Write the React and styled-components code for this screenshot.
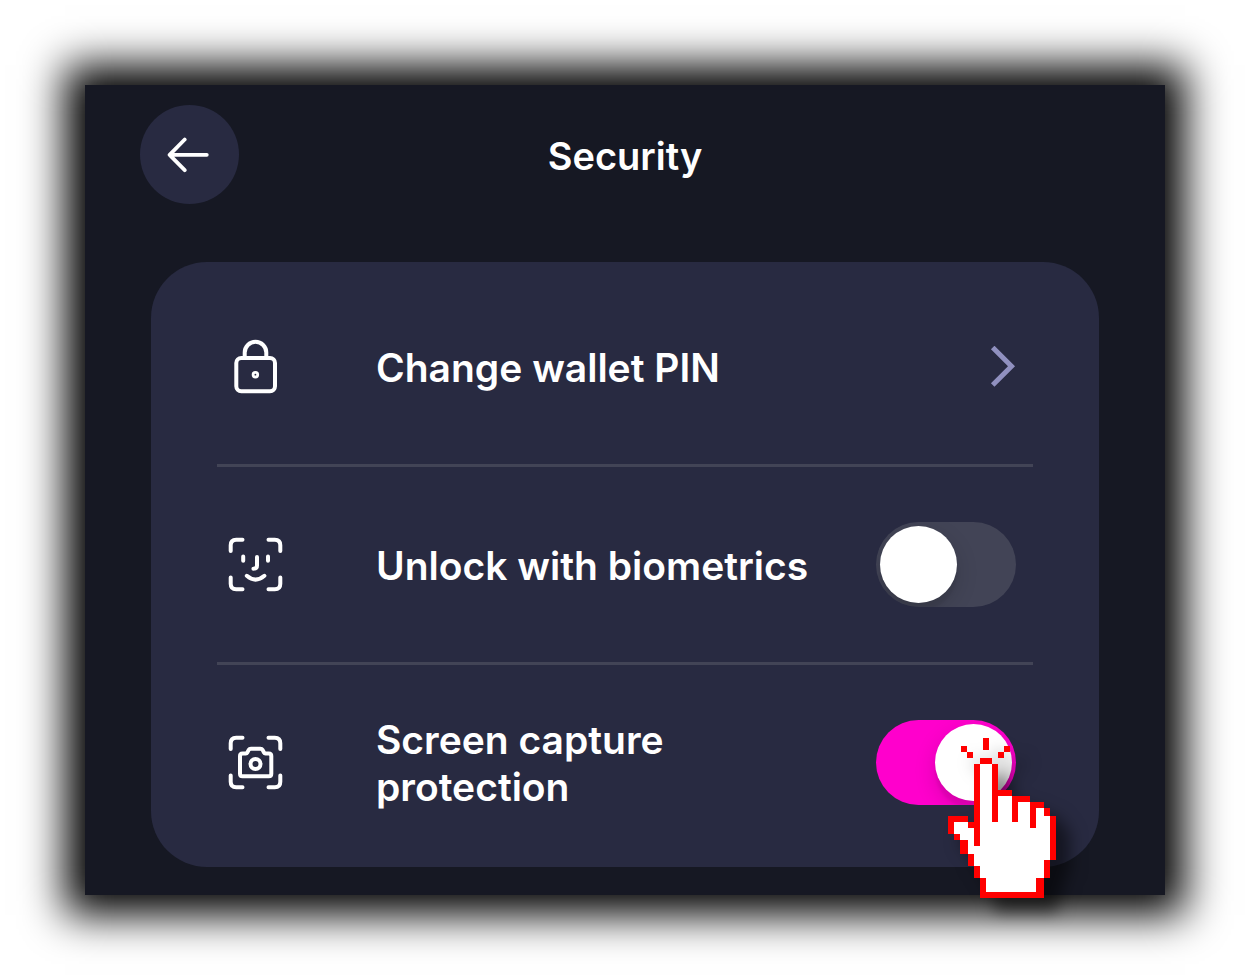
import { useState } from 'react';
import styled, { createGlobalStyle } from 'styled-components';

const GlobalStyle = createGlobalStyle`
    * {
        box-sizing: border-box;
    }

    body {
        margin: 0;
        background: #FFFFFF;
        font-family: Inter, 'Liberation Sans', sans-serif;
        overflow-x: hidden;
    }
`;

const Page = styled.main`
    padding: 85px;
`;

const Screen = styled.section`
    padding: 20px 55px 28px;
    background: #161823;
    color: #FFFFFF;
    box-shadow: 0 0 40px 20px #000000;
`;

const Header = styled.header`
    display: grid;
    grid-template-columns: 99px 1fr 99px;
    align-items: center;
    margin-bottom: 58px;
`;

const BackButton = styled.button`
    display: flex;
    align-items: center;
    justify-content: center;
    width: 99px;
    height: 99px;
    padding: 0;
    border: none;
    border-radius: 50%;
    background: #282A41;
    color: #FFFFFF;
    cursor: pointer;
`;

const Title = styled.h1`
    margin: 0;
    padding-top: 4px;
    font-size: 38px;
    font-weight: 600;
    line-height: 47px;
    text-align: center;
`;

const Card = styled.ul`
    margin: 0 11px;
    padding: 7px 66px;
    border-radius: 56px;
    background: #282A41;
    list-style: none;
`;

const Row = styled.li`
    border-top: ${(props) => (props.$first ? 'none' : '3px solid #424456')};
`;

const RowBody = styled.div`
    display: flex;
    align-items: center;
    width: 100%;
    min-height: 195px;
    padding: 0 17px 0 10px;
`;

const LinkBody = styled(RowBody).attrs({ as: 'button', type: 'button' })`
    border: none;
    background: none;
    color: inherit;
    font-family: inherit;
    text-align: left;
    cursor: pointer;
`;

const Label = styled.span`
    flex: 1;
    margin: 0 24px 0 93px;
    padding-top: 1px;
    font-size: 39px;
    font-weight: 600;
    line-height: 47px;
`;

const SwitchBox = styled.div`
    position: relative;
    height: 85px;
`;

const Switch = styled.input`
    appearance: none;
    display: block;
    width: 140px;
    height: 85px;
    margin: 0;
    padding: 4px;
    border-radius: 43px;
    background: ${(props) => (props.checked ? '#FF00CC' : '#424456')};
    overflow: hidden;
    cursor: pointer;

    &::before {
        content: '';
        display: block;
        width: 77px;
        height: 77px;
        margin-left: ${(props) => (props.checked ? 'auto' : '0')};
        border-radius: 50%;
        background: #FFFFFF;
        box-shadow: 0 8px 22px rgba(0, 0, 0, 0.15), 0 8px 3px rgba(0, 0, 0, 0.06);
    }
`;

const Pointer = styled.svg`
    position: absolute;
    top: 18px;
    left: 72px;
    filter: drop-shadow(14px 14px 8px rgba(0, 0, 0, 0.5));
    pointer-events: none;
`;

const RowIcon = styled.svg`
    flex: none;
    width: 56px;
    height: 56px;
    fill: none;
    stroke: #FFFFFF;
    stroke-width: 4;
    stroke-linecap: round;
    stroke-linejoin: round;
`;

const LockIcon = () => (
    <RowIcon viewBox="0 0 56 56" aria-hidden="true">
        <rect x="9.3" y="19" width="38.7" height="33.3" rx="5" />
        <path d="M17.7 19V13.6a10.8 10.8 0 0 1 21.6 0V19" />
        <circle cx="28.4" cy="35.7" r="2.3" strokeWidth="2.8" />
    </RowIcon>
)

const Corners = () => (
    <path d="M3.7 14V8.2q0-5.5 5.5-5.5H15.5M41.5 2.7H47.8q5.5 0 5.5 5.5V14M53.3 40.5V46.8q0 5.5-5.5 5.5H41.5M15.5 52.3H9.2q-5.5 0-5.5-5.5V40.5" />
)

const FaceIcon = () => (
    <RowIcon viewBox="0 0 56 56" aria-hidden="true">
        <Corners />
        <path d="M16.2 19.4V23.7M41 19.4V23.7M30 20v8.5q0 3.2-3.6 3.2M19.8 38.8q8.7 7.6 17.6 0" />
    </RowIcon>
)

const CameraIcon = () => (
    <RowIcon viewBox="0 0 56 56" aria-hidden="true">
        <Corners />
        <path d="M15.5 41.3H41.8q2.5 0 2.5-2.5V21q0-2.5-2.5-2.5H38.5q-1 0-1.5-1l-1.3-2.4q-.8-1.4-2.4-1.4H24q-1.6 0-2.4 1.4L20.3 17.5q-.5 1-1.5 1H15.5q-2.5 0-2.5 2.5V38.8q0 2.5 2.5 2.5z" />
        <circle cx="28.5" cy="29" r="5" />
    </RowIcon>
)

const ArrowIcon = () => (
    <svg width="45" height="37" viewBox="0 0 45 37" fill="none" stroke="currentColor" strokeWidth="3.8" strokeLinecap="round" strokeLinejoin="round" aria-hidden="true">
        <path d="M39.8 18.8H2.6M17.7 3.5L2.6 18.8L17.7 34.2" />
    </svg>
)

const ChevronIcon = () => (
    <svg width="26" height="42" viewBox="0 0 26 42" fill="none" stroke="#9090BF" strokeWidth="5" aria-hidden="true">
        <path d="M2.7 1.5L21.5 20.2L2.7 39" />
    </svg>
)

const HandPointer = () => (
    <Pointer width="108" height="160" viewBox="0 0 108 160" shapeRendering="crispEdges" aria-hidden="true">
        <path fill="#FFFFFF" d="M32 26H44V58H64V64H82V70H96V78H102V122H96V140H88V154H38V140H32V128H26V116H20V102H12V96H6V84H20V90H26V26z" />
        <path
            fill="#FF0000"
            d="M35 0h6v12h-6zM13 8h6v6h-6zM19 14h6v6h-6zM56 8h6v6h-6zM50 14h6v6h-6zM32 20h12v6h-12z
            M26 26h6v82h-6zM44 26h6v58h-6zM50 52h14v6h-14zM64 58h18v6h-12v20h-6zM82 64h14v6h-8v20h-6z
            M96 70h6v8h-6zM102 78h6v44h-6zM96 122h6v18h-6zM88 140h8v20h-64v-20h6v14h50z
            M26 128h6v12h-6zM20 116h6v12h-6zM12 102h8v14h-8zM6 96h6v6h-6zM0 78h20v6h-14v12h-6zM20 84h6v6h-6z"
        />
    </Pointer>
)

const App = () => {
    const [biometrics, setBiometrics] = useState(false);
    const [protection, setProtection] = useState(true);

    const onChangeBiometrics = (e) => {
        setBiometrics(e.target.checked);
    }

    const onChangeProtection = (e) => {
        setProtection(e.target.checked);
    }

    return (
        <Page>
            <GlobalStyle />
            <Screen>
                <Header>
                    <BackButton type="button" aria-label="Back">
                        <ArrowIcon />
                    </BackButton>
                    <Title>Security</Title>
                </Header>
                <Card>
                    <Row $first>
                        <LinkBody>
                            <LockIcon />
                            <Label>Change wallet PIN</Label>
                            <ChevronIcon />
                        </LinkBody>
                    </Row>
                    <Row>
                        <RowBody>
                            <FaceIcon />
                            <Label as="label" htmlFor="biometrics">Unlock with biometrics</Label>
                            <SwitchBox>
                                <Switch
                                    id="biometrics"
                                    type="checkbox"
                                    checked={biometrics}
                                    onChange={onChangeBiometrics}
                                />
                            </SwitchBox>
                        </RowBody>
                    </Row>
                    <Row>
                        <RowBody>
                            <CameraIcon />
                            <Label as="label" htmlFor="protection">Screen capture protection</Label>
                            <SwitchBox>
                                <Switch
                                    id="protection"
                                    type="checkbox"
                                    checked={protection}
                                    onChange={onChangeProtection}
                                />
                                <HandPointer />
                            </SwitchBox>
                        </RowBody>
                    </Row>
                </Card>
            </Screen>
        </Page>
    )
}

export default App;
